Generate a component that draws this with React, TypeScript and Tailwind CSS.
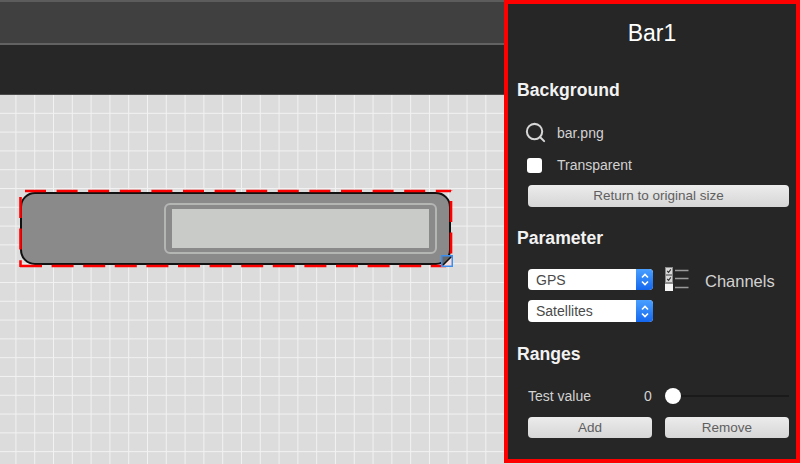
import React from 'react';
import { Search } from 'lucide-react';

const SelectBox: React.FC<{ label: string; className?: string }> = ({ label, className = '' }) => (
  <div className={`flex w-[125px] items-stretch overflow-hidden rounded-[4px] bg-white ${className}`}>
    <span className="flex-1 pl-2 text-[14px] leading-[22px] text-[#4a4a4a]">{label}</span>
    <span className="flex w-[17px] items-center justify-center bg-gradient-to-b from-[#4a9fff] to-[#1467ee]">
      <svg width="10" height="15" viewBox="0 0 10 15" fill="none" stroke="white" strokeWidth="1.6">
        <path d="M2 5.5 5 2.5 8 5.5" />
        <path d="M2 9.5 5 12.5 8 9.5" />
      </svg>
    </span>
  </div>
);

const PanelButton: React.FC<{ label: string; className?: string }> = ({ label, className = '' }) => (
  <div className={`flex h-[21px] items-center justify-center rounded-[4px] bg-gradient-to-b from-[#ececec] to-[#d6d6d6] pt-px text-[13.5px] text-[#5f5f5f] ${className}`}>
    {label}
  </div>
);

const ChannelsIcon = () => (
  <svg width="25" height="25" viewBox="0 0 25 25" fill="none">
    <rect x="0.5" y="0.5" width="7" height="7" fill="#d8d8d8" stroke="#8a8a8a" />
    <path d="M2.2 4 3.6 5.4 5.8 2.4" stroke="#333" strokeWidth="1.1" />
    <rect x="0.5" y="8.5" width="7" height="7" fill="#d8d8d8" stroke="#8a8a8a" />
    <path d="M2.2 12 3.6 13.4 5.8 10.4" stroke="#333" strokeWidth="1.1" />
    <rect x="0" y="16.5" width="8" height="7.5" fill="#f4f4f4" />
    <path d="M10 3.5H23.5M10 11.5H23.5M10 20.5H23.5" stroke="#9a9a9a" strokeWidth="1.4" />
  </svg>
);

// selected bar widget on the free canvas
const BarWidget = () => (
  <div className="absolute left-[16px] top-[91px] h-[84px] w-[440px]">
    <div className="absolute left-[4px] top-[6px] flex h-[73px] w-[431px] items-center justify-end rounded-[15px] border-2 border-[#111] bg-[#8a8a8a] pr-[12px]">
      <div className="flex h-[51px] w-[273px] items-center justify-center rounded-[6px] border-2 border-[#b4b6b4]">
        <div className="h-[39px] w-[257px] bg-[#c9cbc9]" />
      </div>
    </div>
    <svg className="absolute inset-0" width="440" height="84" fill="none" stroke="#ff0000" strokeWidth="2.6">
      <line x1="9" y1="5" x2="435" y2="5" strokeDasharray="21 10.6" />
      <line x1="435" y1="4" x2="435" y2="80" strokeDasharray="21 10.6" strokeDashoffset="-11" />
      <line x1="4" y1="80" x2="430" y2="80" strokeDasharray="22 9.6" />
      <line x1="4.5" y1="10" x2="4.5" y2="81" strokeDasharray="21 10.6" strokeDashoffset="-1" />
    </svg>
    <svg className="absolute left-[425px] top-[69px]" width="12" height="12" viewBox="0 0 12 12">
      <rect width="12" height="12" fill="#f6dede" />
      <path d="M1 11 11 1H1Z" fill="#666" />
      <path d="M1.5 10.5 10.5 1.5" stroke="#111" strokeWidth="1.6" />
      <rect x="0.75" y="0.75" width="10.5" height="10.5" fill="none" stroke="#3b8ef0" strokeWidth="1.5" />
    </svg>
  </div>
);

export default function App() {
  return (
    <div className="flex h-[464px] w-[800px] overflow-hidden bg-[#dcdcdc] font-['Liberation_Sans',Arial,sans-serif]">
      <div className="flex w-[504px] flex-col">
        <div className="h-[45px] border-y-2 border-t-[#5c5c5c] border-b-[#626262] bg-[#404040]" />
        <div className="h-[50px] border-b border-b-[#4a4a4a] bg-[#272727]" />
        <div className="relative flex-1 bg-[#dcdcdc] bg-[linear-gradient(to_right,transparent_17.5px,#f2f2f2_17.5px),linear-gradient(to_bottom,transparent_17.5px,#f2f2f2_17.5px)] bg-[size:18.8px_18.8px] bg-[position:-2.4px_0px]">
          <BarWidget />
        </div>
      </div>

      <div className="flex h-[463px] w-[296px] flex-col border-4 border-[#ff0000] bg-[#262626] pl-[9px] pr-[7px]">
        <div className="flex h-[58px] items-center justify-center pr-[2px] text-[23px] text-white">Bar1</div>

        <h2 className="mt-4 flex h-6 items-center pt-px text-[17.6px] font-bold text-[#f2f2f2]">Background</h2>
        <div className="mt-[19px] ml-[7px] flex h-6 items-center pt-px text-[14px] text-[#d2d2d2]">
          <Search size={23} strokeWidth={2.1} className="-mt-[3px] text-[#d6d6d6]" />
          <span className="ml-[10px]">bar.png</span>
        </div>
        <div className="mt-2 ml-[10px] flex h-6 items-center pt-px text-[14px] text-[#d2d2d2]">
          <span className="h-[15px] w-[15px] rounded-[3px] bg-white" />
          <span className="ml-[15px]">Transparent</span>
        </div>
        <PanelButton label="Return to original size" className="mt-2 ml-[11px] h-[22px]" />

        <h2 className="mt-[19px] flex h-6 items-center text-[17.6px] font-bold text-[#f2f2f2]">Parameter</h2>
        <div className="mt-[19px] ml-[11px] flex">
          <div className="flex flex-col gap-[10px]">
            <SelectBox label="GPS" className="h-[21px]" />
            <SelectBox label="Satellites" className="h-[22px]" />
          </div>
          <div className="ml-3 -mt-[2px]">
            <ChannelsIcon />
          </div>
          <span className="ml-[15px] text-[16.5px] leading-[24px] text-[#d2d2d2]">Channels</span>
        </div>

        <h2 className="mt-5 flex h-6 items-center text-[17.6px] font-bold text-[#f2f2f2]">Ranges</h2>
        <div className="mt-[18px] ml-[11px] flex h-6 items-center text-[14px] text-[#d2d2d2]">
          <span className="w-[116px]">Test value</span>
          <span className="w-[12px] text-[14px]">0</span>
          <div className="relative ml-[9px] flex h-4 flex-1 items-center">
            <div className="h-[2px] w-full bg-[#1a1a1a]" />
            <span className="absolute left-0 top-0 h-4 w-4 rounded-full bg-white" />
          </div>
        </div>
        <div className="mt-[9px] ml-[11px] flex gap-[13px]">
          <PanelButton label="Add" className="w-[124px]" />
          <PanelButton label="Remove" className="flex-1" />
        </div>
      </div>
    </div>
  );
}
